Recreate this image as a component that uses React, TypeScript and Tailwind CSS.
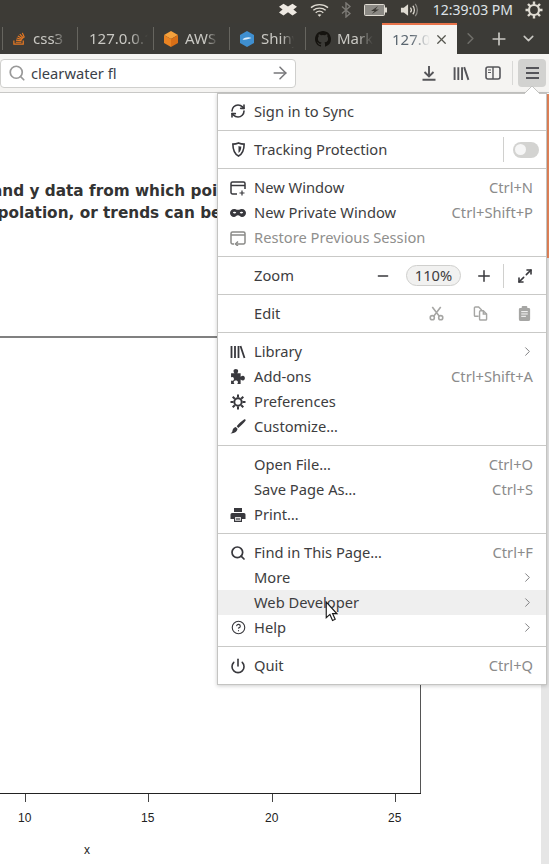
import { ChevronDown, ChevronRight, Plus, X, RefreshCw, Search, ArrowRight, Power, Minus, Maximize2, CircleHelp } from 'lucide-react';
import type { ReactNode } from 'react';

function LibraryIcon({ className }: { className?: string }) {
  return (
    <svg viewBox="0 0 16 16" className={className} fill="none" stroke="currentColor" strokeWidth="1.8">
      <path d="M1.500 2v12M5 2v12M8.500 2v12M10.500 2l4 12" />
    </svg>
  );
}

function SidebarIcon({ className }: { className?: string }) {
  return (
    <svg viewBox="0 0 16 16" className={className} fill="none" stroke="currentColor">
      <rect x="1" y="2" width="14" height="12" rx="2" strokeWidth="1.600" />
      <path d="M8 2v12" strokeWidth="1.400" />
      <path d="M3 5h3M3 7.500h3" strokeWidth="1.100" />
    </svg>
  );
}

function DownloadIcon({ className }: { className?: string }) {
  return (
    <svg viewBox="0 0 14 16" className={className} fill="none" stroke="currentColor" strokeWidth="1.900">
      <path d="M7 1v10M2.500 7 7 11.500 11.500 7M.5 14.800h13" />
    </svg>
  );
}

function NewWindowIcon({ className }: { className?: string }) {
  return (
    <svg viewBox="0 0 16 16" className={className} fill="none" stroke="currentColor" strokeWidth="1.500">
      <path d="M7 14H2.500A1.500 1.500 0 0 1 1 12.500v-9A1.500 1.500 0 0 1 2.500 2h11A1.500 1.500 0 0 1 15 3.500V9" />
      <path d="M1 5.500h14" />
      <path d="M12 10.500v5M9.500 13h5" strokeWidth="1.200" />
    </svg>
  );
}

function MaskIcon({ className }: { className?: string }) {
  return (
    <svg viewBox="0 0 16 16" className={className} fill="currentColor">
      <path fillRule="evenodd" d="M4 4c1.600 0 2.600.8 4 .8s2.400-.8 4-.8c2.200 0 4 1.700 4 4s-1.700 4-4 4c-1.800 0-2.500-1.700-4-1.700S5.800 12 4 12C1.700 12 0 10.300 0 8s1.800-4 4-4zM4.600 6.800c-.9 0-1.500.4-1.700 1 .9.900 2.500.900 3.400 0-.3-.6-.9-1-1.700-1zm6.800 0c-.8 0-1.400.4-1.700 1 .9.900 2.500.900 3.400 0-.2-.6-.8-1-1.700-1z" />
    </svg>
  );
}

function RestoreIcon({ className }: { className?: string }) {
  return (
    <svg viewBox="0 0 16 16" className={className} fill="none" stroke="currentColor" strokeWidth="1.500">
      <path d="M4 14H2.500A1.500 1.500 0 0 1 1 12.500v-9A1.500 1.500 0 0 1 2.500 2h11A1.500 1.500 0 0 1 15 3.500v9a1.500 1.500 0 0 1-1.500 1.500H7" />
      <path d="M1 5h14" />
      <path d="M8 11.500 5.500 14 8 16" />
    </svg>
  );
}

function ShieldIcon({ className }: { className?: string }) {
  return (
    <svg viewBox="0 0 16 16" className={className}>
      <path d="M8 1c2 .9 4 1.300 6 1.300 0 6-1.800 10.300-6 12.700C3.800 12.600 2 8.300 2 2.300 4 2.300 6 1.900 8 1z" fill="none" stroke="currentColor" strokeWidth="1.700" />
      <path d="M8 4.200c1 .4 2 .6 3 .7 0 3-.9 5.400-3 6.800z" fill="currentColor" />
    </svg>
  );
}

function PuzzleIcon({ className }: { className?: string }) {
  return (
    <svg viewBox="0 0 16 16" className={className} fill="currentColor">
      <path d="M1 5h3.200c-.6-.8-.9-1.500-.9-2.200C3.300 1.700 4.300 1 5.500 1s2.200.7 2.200 1.800c0 .7-.3 1.400-.9 2.200H10v3.200c.8-.6 1.500-.9 2.200-.9 1.100 0 1.800 1 1.800 2.200s-.7 2.200-1.800 2.200c-.7 0-1.400-.3-2.200-.9V15H6.800c.5-.7.700-1.200.7-1.700 0-1-.9-1.600-2-1.600s-2 .6-2 1.600c0 .5.200 1 .7 1.700H1v-3.300c.5.300.9.400 1.200.4.900 0 1.500-.8 1.500-1.800S3.100 8.500 2.200 8.500c-.3 0-.7.1-1.200.4z" />
    </svg>
  );
}

function GearIcon({ className }: { className?: string }) {
  return (
    <svg viewBox="0 0 16 16" className={className} fill="none" stroke="currentColor">
      <circle cx="8" cy="8" r="3.700" strokeWidth="2" />
      <path d="M8 .5v3M8 12.500v3M.5 8h3M12.500 8h3M2.700 2.700l2.100 2.100M11.200 11.200l2.100 2.100M13.300 2.700l-2.100 2.100M4.800 11.200l-2.100 2.100" strokeWidth="2" />
    </svg>
  );
}

function BrushIcon({ className }: { className?: string }) {
  return (
    <svg viewBox="0 0 16 16" className={className} fill="currentColor">
      <path d="M15.500.7c.3.3.2.700 0 1-2.200 2.700-4.500 5-7.200 7.200L6.700 7.300C8.900 4.600 11.300 2.400 14 .5c.5-.2 1.100-.2 1.500.2z" />
      <path d="M5.800 8.100l1.700 1.700c-.2 2.500-2.400 4.800-7 4.700 1.400-.8 1.800-1.600 2-2.900.3-1.900 1.500-3.200 3.300-3.500z" />
    </svg>
  );
}

function PrinterIcon({ className }: { className?: string }) {
  return (
    <svg viewBox="0 0 16 16" className={className}>
      <path fillRule="evenodd" fill="currentColor" d="M4 1h8v4H4zM2 6h12a1.500 1.500 0 0 1 1.500 1.500V12H12v3H4v-3H.5V7.500A1.500 1.500 0 0 1 2 6zm3.200 4v3.800h5.600V10z" />
      <path d="M6 11.300h4M6 12.700h4" stroke="currentColor" strokeWidth=".8" />
    </svg>
  );
}

function ScissorsIcon({ className }: { className?: string }) {
  return (
    <svg viewBox="0 0 16 16" className={className} fill="none" stroke="currentColor" strokeWidth="1.700">
      <circle cx="3.500" cy="12.500" r="2.200" />
      <circle cx="12.500" cy="12.500" r="2.200" />
      <path d="M5 11 12.500 1M11 11 3.500 1" />
    </svg>
  );
}

function CopyIcon({ className }: { className?: string }) {
  return (
    <svg viewBox="0 0 16 16" className={className} fill="none" stroke="currentColor" strokeWidth="1.500">
      <path d="M6 11H2.500a1 1 0 0 1-1-1V2a1 1 0 0 1 1-1H6l3 3v1" />
      <path d="M7 6a1 1 0 0 1 1-1h3l3.500 3.500V14a1 1 0 0 1-1 1H8a1 1 0 0 1-1-1z" />
      <path d="M11 5v3.500h3.500" />
    </svg>
  );
}

function PasteIcon({ className }: { className?: string }) {
  return (
    <svg viewBox="0 0 16 16" className={className}>
      <path fill="currentColor" d="M6 0h4a1 1 0 0 1 1 1v1h1.500A1.500 1.500 0 0 1 14 3.500V14a2 2 0 0 1-2 2H4a2 2 0 0 1-2-2V3.500A1.500 1.500 0 0 1 3.500 2H5V1a1 1 0 0 1 1-1z" />
      <path stroke="#ffffff" strokeWidth="1" d="M4.500 6h7M4.500 8.500h7M4.500 11h5" />
    </svg>
  );
}

function Row({ icon, label, shortcut, arrow, muted, hover }: { icon?: ReactNode; label: string; shortcut?: string; arrow?: boolean; muted?: boolean; hover?: boolean }) {
  return (
    <div className={`flex h-[25px] items-center pr-[7px] ${hover ? 'bg-[#efefef]' : ''}`}>
      <div className={`flex w-[36px] shrink-0 items-center justify-center pl-[4px] ${muted ? 'text-[#8a8a88]' : 'text-[#38383d]'}`}>{icon}</div>
      <span className={`flex-1 text-[14.7px] ${muted ? 'text-[#8f8f8d]' : 'text-[#3d3d40]'}`}>{label}</span>
      {shortcut && <span className="pr-[6px] text-[14.7px] text-[#8b8b8b]">{shortcut}</span>}
      {arrow && <ChevronRight className="mr-[4px] h-[15px] w-[15px] text-[#77777a]" strokeWidth={1.5} />}
    </div>
  );
}

function Sep() {
  return <div className="h-px bg-[#c9c9c7]" />;
}

function Tab({ icon, label, first, wide }: { icon?: ReactNode; label: string; first?: boolean; wide?: boolean }) {
  return (
    <div className={`my-[4px] flex w-[76px] shrink-0 items-center gap-[6px] overflow-hidden border-r border-r-[#66655f] pl-[9px] text-[15px] ${wide ? 'pl-[11px]' : ''} text-[#c9c8c3] ${first ? 'border-l border-l-[#66655f]' : ''}`}>
      {icon}
      <span className={`min-w-0 flex-1 overflow-hidden whitespace-nowrap ${wide ? '[mask-image:linear-gradient(to_right,#000_65%,transparent_92%)]' : '[mask-image:linear-gradient(to_right,#000_48%,transparent_75%)]'}`}>{label}</span>
    </div>
  );
}

export default function App() {
  return (
    <div className="relative h-[864px] w-[549px] overflow-hidden bg-white font-['Noto_Sans',sans-serif]">
      {/* system bar */}
      <div className="flex h-[23px] items-center justify-end bg-[#3d3b36] pb-[3px] pr-[6px] text-[#dfdbd2]">
        <svg viewBox="0 0 20 16" className="mr-[13px] h-[16px] w-[18px]" fill="#eee9e2">
          <path d="M5 1l5 3.200L15 1l5 3.300-4 3.200 4 3.300-5 3.200-5-3.500-5 3.500-5-3.200 4-3.300-4-3.200z" />
        </svg>
        <svg viewBox="0 0 20 14" className="mr-[12px] h-[14px] w-[19px]" fill="none" stroke="#dfdbd2" strokeWidth="1.400">
          <path d="M1 4.500c5-4.300 13-4.300 18 0M3.500 7.200c3.500-3 9.500-3 13 0M6 9.800c2.300-1.900 5.700-1.900 8 0" />
          <path d="M8 12c1-.8 3-.8 4 0l-2 2z" fill="#dfdbd2" stroke="none" />
        </svg>
        <svg viewBox="0 0 10 16" className="mr-[13px] h-[16px] w-[10px]" fill="none" stroke="#7d7b76" strokeWidth="1.400">
          <path d="M1 4.500 9 11.500 5 15V1l4 3.500L1 11.500" />
        </svg>
        <svg viewBox="0 0 23 12" className="mr-[13px] h-[12px] w-[23px]">
          <rect x=".5" y=".5" width="20" height="11" rx="1" fill="#8c8a85" stroke="#dfdbd2" />
          <rect x="21" y="3.500" width="2" height="5" fill="#dfdbd2" />
          <path d="M14 2 7 7h3.500L8 10l7-4.500h-3.500z" fill="#3d3b36" />
        </svg>
        <svg viewBox="0 0 20 16" className="mr-[14px] h-[16px] w-[19px]" fill="none" stroke="#dfdbd2" strokeWidth="1.300">
          <path d="M1 5.500h3L8.500 2v12L4 10.500H1z" fill="#dfdbd2" stroke="none" />
          <path d="M11 5.500c1.200 1.500 1.200 3.500 0 5M13.500 3.500c2.200 2.500 2.200 6.500 0 9" />
          <path d="M16 1.500c3 3.500 3 9.500 0 13" stroke="#8c8a85" />
        </svg>
        <span className="mr-[12px] text-[14px] leading-none text-[#dfe3e8]">12:39:03 PM</span>
        <svg viewBox="0 0 18 18" className="h-[18px] w-[18px]" fill="none" stroke="#dfdbd2">
          <circle cx="9" cy="9" r="5" strokeWidth="2.200" />
          <path d="M9 .5v3.500M9 14v3.500M.5 9H4M14 9h3.500M3 3l2.400 2.400M12.600 12.600 15 15M15 3l-2.400 2.400M5.400 12.600 3 15" strokeWidth="2.400" />
        </svg>
      </div>

      {/* tab strip */}
      <div className="flex h-[31px] items-stretch bg-[#3c3b37] pl-[2px]">
        <Tab
          first
          label="css3"
          icon={
            <svg viewBox="0 0 16 16" className="h-[15px] w-[15px] shrink-0" fill="none" stroke="#e87922" strokeWidth="1.300">
              <path d="M2 10v4h10v-4M4 12h6M4.300 9.800l6 .5M5 7.500l5.800 1.600M6.200 5.300l5.300 3M8.300 3.300l4 4.300M11 2l2.200 5" />
            </svg>
          }
        />
        <Tab wide label="127.0.0.1" />
        <Tab
          label="AWS"
          icon={
            <svg viewBox="0 0 16 16" className="h-[16px] w-[16px] shrink-0">
              <path d="M8 0l7 4-7 4-7-4z" fill="#f5a13c" />
              <path d="M1 4l7 4v8l-7-4z" fill="#ea8322" />
              <path d="M15 4l-7 4v8l7-4z" fill="#d96f17" />
            </svg>
          }
        />
        <Tab
          label="Shiny"
          icon={
            <svg viewBox="0 0 16 16" className="h-[16px] w-[16px] shrink-0">
              <path d="M8 0l7 4v8l-7 4-7-4V4z" fill="#3f8fd0" />
              <path d="M3.500 8.500c2-2.500 7-3 9-1.500-2 .5-6 2.500-9 1.500z" fill="#dfeefa" />
            </svg>
          }
        />
        <div className="my-[4px] flex w-[76px] shrink-0 items-center gap-[6px] overflow-hidden pl-[9px] text-[15px] text-[#c9c8c3]">
          <svg viewBox="0 0 16 16" className="h-[16px] w-[16px] shrink-0" fill="#15130f">
            <path d="M8 0C3.580 0 0 3.580 0 8c0 3.540 2.290 6.530 5.470 7.590.4.070.55-.17.55-.38v-1.340c-2.230.48-2.700-1.070-2.700-1.070-.36-.92-.89-1.170-.89-1.170-.73-.5.050-.49.050-.49.800.060 1.230.830 1.230.830.710 1.220 1.870.870 2.330.660.070-.520.280-.870.510-1.070-1.780-.200-3.640-.890-3.640-3.950 0-.870.310-1.590.820-2.150-.080-.200-.360-1.020.080-2.120 0 0 .670-.210 2.200.820a7.600 7.600 0 0 1 4 0c1.530-1.040 2.200-.820 2.200-.820.440 1.100.160 1.920.080 2.120.510.560.820 1.270.820 2.150 0 3.070-1.870 3.750-3.650 3.950.290.250.540.730.540 1.480v2.200c0 .210.150.460.550.380A8.010 8.010 0 0 0 16 8c0-4.420-3.580-8-8-8z" />
          </svg>
          <span className="w-[36px] overflow-hidden whitespace-nowrap [mask-image:linear-gradient(to_right,#000_55%,transparent_100%)]">Mark</span>
        </div>
        <div className="flex h-[31px] w-[75px] shrink-0 flex-col bg-[#f5f4f2]">
          <div className="h-[2px] bg-[#e8734a]" />
          <div className="flex flex-1 items-center justify-between pl-[10px] pr-[8px] text-[15px] text-[#5b6670]">
            <span className="w-[38px] overflow-hidden whitespace-nowrap [mask-image:linear-gradient(to_right,#000_50%,transparent_100%)]">127.0.0.1</span>
            <X className="h-[15px] w-[15px] text-[#55554f]" strokeWidth={2} />
          </div>
        </div>
        <div className="flex flex-1 items-center text-[#c9c8c3]">
          <ChevronRight className="ml-[4px] h-[19px] w-[19px] text-[#6f6e69]" strokeWidth={2} />
          <Plus className="ml-[9px] h-[20px] w-[20px]" strokeWidth={2} />
          <ChevronDown className="ml-[11px] h-[17px] w-[17px]" strokeWidth={2.2} />
        </div>
      </div>

      {/* nav toolbar */}
      <div className="flex h-[39px] items-center border-b border-b-[#c8c8c6] bg-[#f5f4f2] pr-[3px]">
        <div className="flex h-[29px] w-[296px] items-center rounded-[4px] border border-[#cfcfcd] bg-white pl-[7px] pr-[5px]">
          <Search className="h-[18px] w-[18px] text-[#999999]" strokeWidth={2.3} />
          <span className="ml-[5px] flex-1 text-[14.7px] text-[#3b4148]">clearwater fl</span>
          <ArrowRight className="h-[20px] w-[20px] text-[#77777a]" strokeWidth={1.8} />
        </div>
        <div className="flex flex-1 items-center justify-end text-[#56565a]">
          <DownloadIcon className="mr-[17px] h-[16px] w-[14px]" />
          <LibraryIcon className="mr-[15px] h-[17px] w-[17px]" />
          <SidebarIcon className="mr-[11px] h-[16px] w-[16px]" />
          <div className="h-[24px] w-px bg-[#d8d8d6]" />
          <div className="ml-[5px] flex h-[28px] w-[28px] flex-col items-center justify-center gap-[3px] rounded-[4px] bg-[#d2d2d0]">
            <div className="h-[2px] w-[13px] bg-[#55555a]" />
            <div className="h-[2px] w-[13px] bg-[#55555a]" />
            <div className="h-[2px] w-[13px] bg-[#55555a]" />
          </div>
        </div>
      </div>

      {/* page behind the menu */}
      <div className="absolute left-0 top-[180px] whitespace-nowrap font-['DejaVu_Sans',sans-serif] text-[15.3px] font-bold leading-[22px] text-[#333333]">
        <div className="ml-[-8px]">and y data from which poin</div>
        <div className="ml-[-10px]">rpolation, or trends can be</div>
      </div>
      <div className="absolute left-0 top-[336px] h-[2px] w-[218px] bg-[#808080]" />
      <div className="absolute left-[420px] top-[680px] h-[113px] w-px bg-[#555555]" />
      <div className="absolute left-0 top-[793px] h-[48px] w-[421px] border-t border-t-[#222222] font-['Liberation_Sans',sans-serif] text-[12px] text-[#222222]">
        {[
          { tick: 'left-[25px]', num: 'left-[18px]', text: '10' },
          { tick: 'left-[148px]', num: 'left-[141px]', text: '15' },
          { tick: 'left-[272px]', num: 'left-[265px]', text: '20' },
          { tick: 'left-[395px]', num: 'left-[388px]', text: '25' },
        ].map((t) => (
          <div key={t.text}>
            <div className={`absolute top-0 h-[8px] w-px bg-[#444444] ${t.tick}`} />
            <span className={`absolute top-[17px] leading-[14px] ${t.num}`}>{t.text}</span>
          </div>
        ))}
        <span className="absolute left-[84px] top-[49px] leading-[14px]">x</span>
      </div>
      <div className="absolute bottom-0 right-0 top-[94px] w-[8px] bg-[#e6e6e6]">
        <div className="ml-auto h-[164px] w-[2px] bg-[#e8875c]" />
      </div>

      {/* main menu popup */}
      <div className="absolute left-[217px] top-[93px] w-[330px] border border-[#c4c4c2] bg-white shadow-[0_1px_4px_rgba(0,0,0,0.2)]">
        <div className="flex h-[36px] items-center pb-[2px]">
          <div className="w-full">
            <Row icon={<RefreshCw className="h-[16px] w-[16px]" strokeWidth={2.4} />} label="Sign in to Sync" />
          </div>
        </div>
        <Sep />
        <div className="flex h-[37px] items-center pr-[7px]">
          <div className="flex w-[36px] shrink-0 items-center justify-center pl-[4px] text-[#38383d]">
            <ShieldIcon className="h-[15px] w-[15px]" />
          </div>
          <span className="flex-1 text-[14.7px] text-[#3d3d40]">Tracking Protection</span>
          <div className="mr-[9px] h-[25px] w-px bg-[#d0d0ce]" />
          <div className="flex h-[16px] w-[26px] items-center rounded-full bg-[#d3d3d1] pl-[2px]">
            <div className="h-[11px] w-[11px] rounded-full bg-[#f6f6f6]" />
          </div>
        </div>
        <Sep />
        <div className="py-[6px]">
          <Row icon={<NewWindowIcon className="h-[16px] w-[16px]" />} label="New Window" shortcut="Ctrl+N" />
          <Row icon={<MaskIcon className="h-[16px] w-[16px]" />} label="New Private Window" shortcut="Ctrl+Shift+P" />
          <Row icon={<RestoreIcon className="h-[16px] w-[16px]" />} label="Restore Previous Session" muted />
        </div>
        <Sep />
        <div className="flex h-[37px] items-center pr-[13px] text-[#38383d]">
          <div className="w-[36px] shrink-0" />
          <span className="flex-1 text-[14.7px] text-[#3d3d40]">Zoom</span>
          <Minus className="h-[16px] w-[16px]" strokeWidth={2} />
          <div className="ml-[15px] flex h-[21px] w-[55px] items-center justify-center rounded-full border border-[#cfcfcd] bg-[#f1f1f0] text-[14.7px] text-[#3d3d40]">110%</div>
          <Plus className="ml-[14px] h-[18px] w-[18px]" strokeWidth={2} />
          <div className="ml-[10px] h-[24px] w-px bg-[#d0d0ce]" />
          <Maximize2 className="ml-[13px] h-[16px] w-[16px]" strokeWidth={2.4} />
        </div>
        <Sep />
        <div className="flex h-[37px] items-center pr-[14px] text-[#a6a6a4]">
          <div className="w-[36px] shrink-0" />
          <span className="flex-1 text-[14.7px] text-[#3d3d40]">Edit</span>
          <ScissorsIcon className="h-[15px] w-[15px]" />
          <CopyIcon className="ml-[29px] h-[15px] w-[15px]" />
          <PasteIcon className="ml-[29px] h-[15px] w-[15px]" />
        </div>
        <Sep />
        <div className="py-[6px]">
          <Row icon={<LibraryIcon className="h-[16px] w-[16px]" />} label="Library" arrow />
          <Row icon={<PuzzleIcon className="h-[17px] w-[17px]" />} label="Add-ons" shortcut="Ctrl+Shift+A" />
          <Row icon={<GearIcon className="h-[16px] w-[16px]" />} label="Preferences" />
          <Row icon={<BrushIcon className="h-[16px] w-[16px]" />} label="Customize…" />
        </div>
        <Sep />
        <div className="py-[6px]">
          <Row label="Open File…" shortcut="Ctrl+O" />
          <Row label="Save Page As…" shortcut="Ctrl+S" />
          <Row icon={<PrinterIcon className="h-[16px] w-[16px]" />} label="Print…" />
        </div>
        <Sep />
        <div className="py-[6px]">
          <Row icon={<Search className="h-[16px] w-[16px]" strokeWidth={2.6} />} label="Find in This Page…" shortcut="Ctrl+F" />
          <Row label="More" arrow />
          <Row label="Web Developer" arrow hover />
          <Row icon={<CircleHelp className="h-[15px] w-[15px]" strokeWidth={1.8} />} label="Help" arrow />
        </div>
        <Sep />
        <div className="flex h-[37px] items-center">
          <div className="w-full">
            <Row icon={<Power className="h-[16px] w-[16px]" strokeWidth={2.4} />} label="Quit" shortcut="Ctrl+Q" />
          </div>
        </div>
      </div>

      {/* arrow of the popup */}
      <svg viewBox="0 0 16 8" className="absolute left-[524px] top-[86px] h-[8px] w-[16px]">
        <path d="M0 8 8 0l8 8" fill="#ffffff" stroke="#c4c4c2" strokeWidth="1" />
      </svg>

      {/* mouse pointer */}
      <svg viewBox="0 0 12 20" className="absolute left-[325px] top-[601px] h-[21px] w-[13px]">
        <path d="M1 1v15l3.500-3.200 2.500 5.700 2.500-1.100-2.500-5.400H11z" fill="#ffffff" stroke="#1a1a1a" strokeWidth="1.100" />
      </svg>
    </div>
  );
}
